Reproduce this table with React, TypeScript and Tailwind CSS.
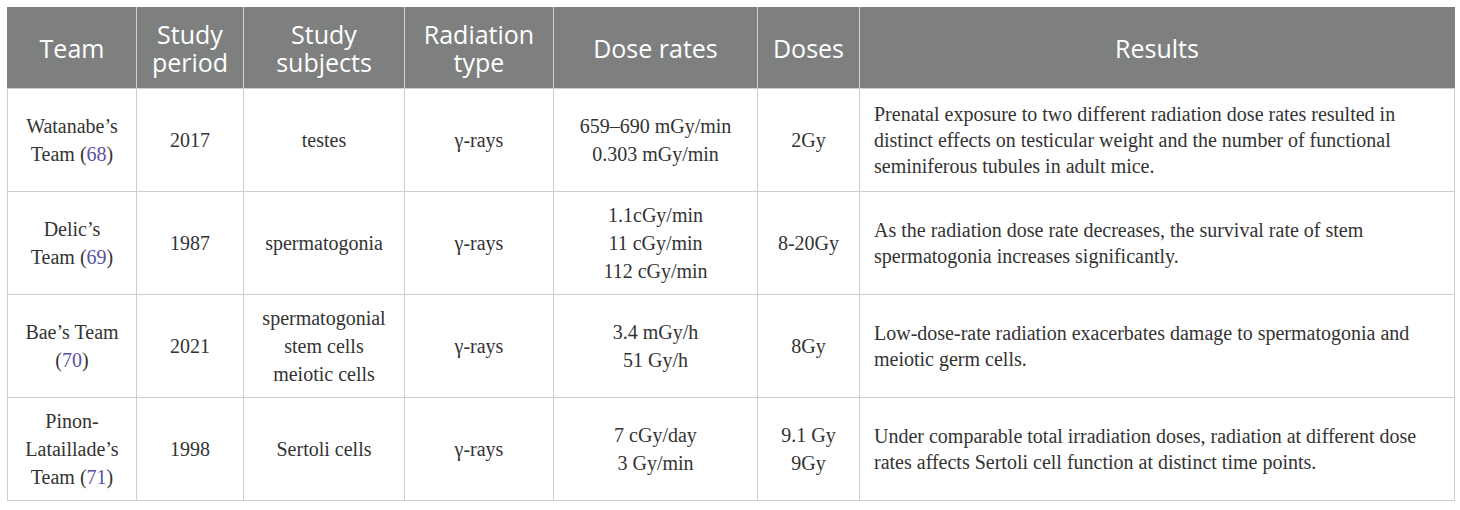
const headers = [
  ['Team'],
  ['Study', 'period'],
  ['Study', 'subjects'],
  ['Radiation', 'type'],
  ['Dose rates'],
  ['Doses'],
  ['Results'],
]

const colWidths = ['w-[129px]', 'w-[107px]', 'w-[161px]', 'w-[149px]', 'w-[204px]', 'w-[102px]', 'w-[595px]']

interface Row {
  team: string[]
  ref: string
  period: string
  subjects: string[]
  type: string
  rates: string[]
  doses: string[]
  results: string[]
}

const rows: Row[] = [
  {
    team: ["Watanabe\u2019s", 'Team ('],
    ref: '68',
    period: '2017',
    subjects: ['testes'],
    type: '\u03b3-rays',
    rates: ['659\u2013690 mGy/min', '0.303 mGy/min'],
    doses: ['2Gy'],
    results: [
      'Prenatal exposure to two different radiation dose rates resulted in',
      'distinct effects on testicular weight and the number of functional',
      'seminiferous tubules in adult mice.',
    ],
  },
  {
    team: ["Delic\u2019s", 'Team ('],
    ref: '69',
    period: '1987',
    subjects: ['spermatogonia'],
    type: '\u03b3-rays',
    rates: ['1.1cGy/min', '11 cGy/min', '112 cGy/min'],
    doses: ['8-20Gy'],
    results: [
      'As the radiation dose rate decreases, the survival rate of stem',
      'spermatogonia increases significantly.',
    ],
  },
  {
    team: ["Bae\u2019s Team", '('],
    ref: '70',
    period: '2021',
    subjects: ['spermatogonial', 'stem cells', 'meiotic cells'],
    type: '\u03b3-rays',
    rates: ['3.4 mGy/h', '51 Gy/h'],
    doses: ['8Gy'],
    results: [
      'Low-dose-rate radiation exacerbates damage to spermatogonia and',
      'meiotic germ cells.',
    ],
  },
  {
    team: ['Pinon-', "Lataillade\u2019s", 'Team ('],
    ref: '71',
    period: '1998',
    subjects: ['Sertoli cells'],
    type: '\u03b3-rays',
    rates: ['7 cGy/day', '3 Gy/min'],
    doses: ['9.1 Gy', '9Gy'],
    results: [
      'Under comparable total irradiation doses, radiation at different dose',
      'rates affects Sertoli cell function at distinct time points.',
    ],
  },
]

const cell = 'border border-[#cfcfcf] align-middle text-center px-1'

function Lines({ items }: { items: string[] }) {
  return (
    <>
      {items.map((t, i) => (
        <div key={i} className="whitespace-nowrap">
          {t}
        </div>
      ))}
    </>
  )
}

export default function App() {
  return (
    <div className="bg-white w-[1460px] h-[510px] pt-[7px] pl-[7px]">
      <table className="table-fixed border-collapse w-[1447px] text-[#333333] font-['Liberation_Serif',serif] text-[20px] leading-[28px]">
        <colgroup>
          {colWidths.map((w, i) => (
            <col key={i} className={w} />
          ))}
        </colgroup>
        <thead>
          <tr className="h-[81px] bg-[#7e807f]">
            {headers.map((h, i) => (
              <th
                key={i}
                className="border border-[#cfcfcf] border-t-[#7e807f] first:border-l-[#7e807f] last:border-r-[#7e807f] font-normal text-white font-['Open_Sans',sans-serif] text-[25px] leading-[28px] align-middle"
              >
                {h.map((l) => (
                  <div key={l}>{l}</div>
                ))}
              </th>
            ))}
          </tr>
        </thead>
        <tbody>
          {rows.map((r) => (
            <tr key={r.period} className="h-[103px]">
              <td className={cell}>
                {r.team.map((t, i) =>
                  i === r.team.length - 1 ? (
                    <div key={i} className="whitespace-nowrap">
                      {t}
                      <span className="text-[#5b52a3]">{r.ref}</span>)
                    </div>
                  ) : (
                    <div key={i} className="whitespace-nowrap">
                      {t}
                    </div>
                  ),
                )}
              </td>
              <td className={cell}>{r.period}</td>
              <td className={cell}>
                <Lines items={r.subjects} />
              </td>
              <td className={cell}>{r.type}</td>
              <td className={cell}>
                <Lines items={r.rates} />
              </td>
              <td className={cell}>
                <Lines items={r.doses} />
              </td>
              <td className="border border-[#cfcfcf] align-middle text-left pl-[14px] pr-2 leading-[26px]">
                <Lines items={r.results} />
              </td>
            </tr>
          ))}
        </tbody>
      </table>
    </div>
  )
}
